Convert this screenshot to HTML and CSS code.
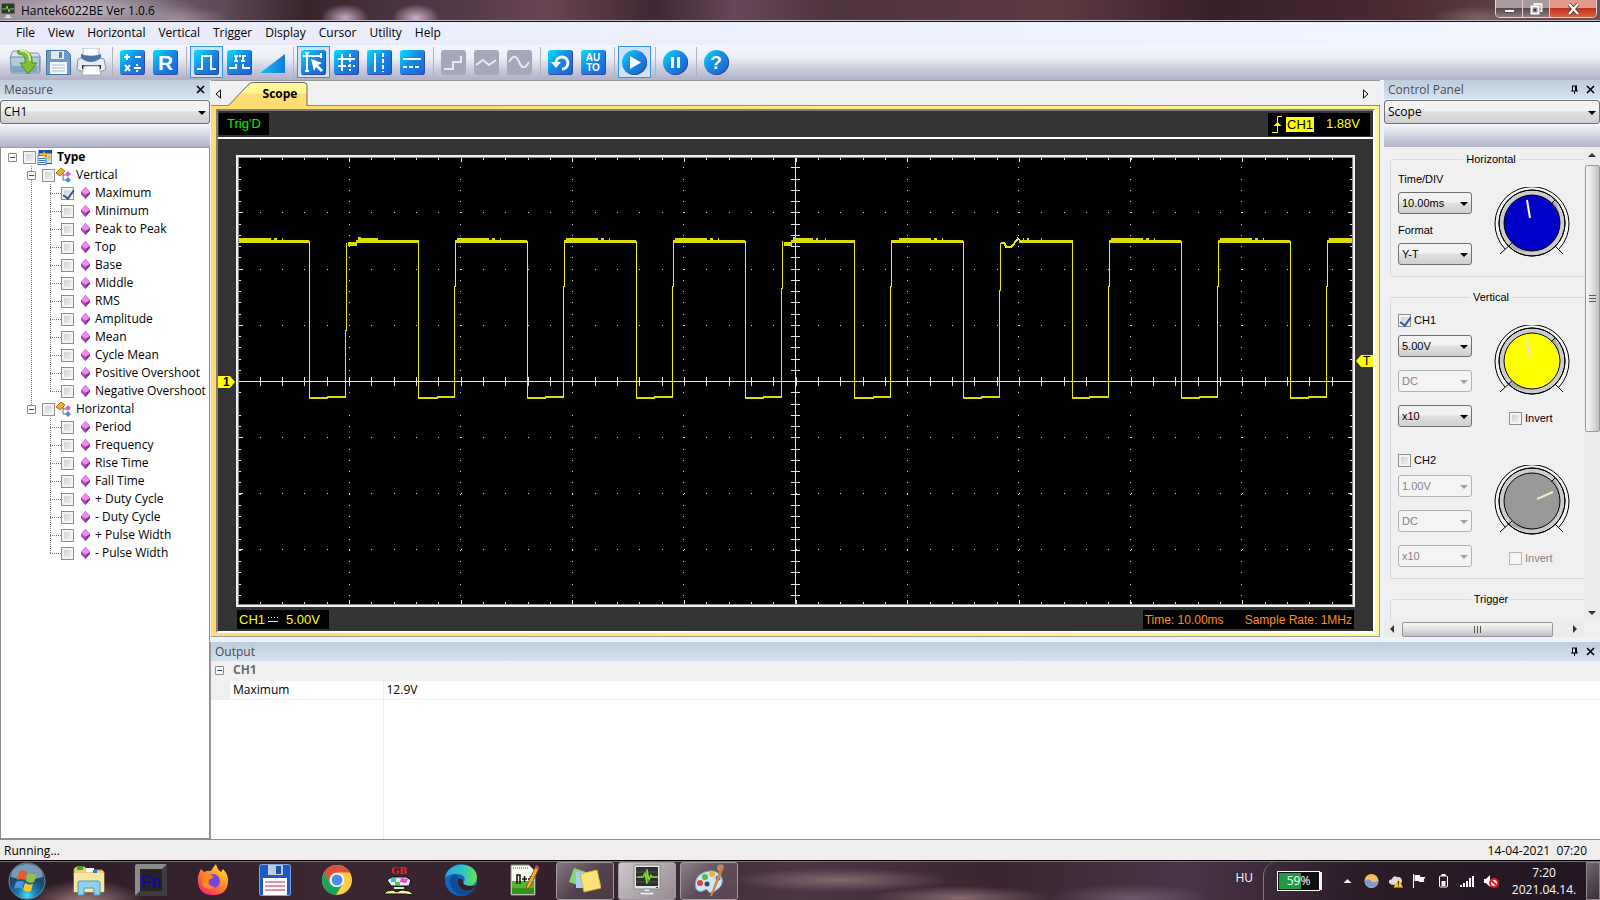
FILE: index.html
```html
<!DOCTYPE html>
<html lang="en">
<head>
    <meta charset="UTF-8">
    <meta name="viewport" content="width=device-width, initial-scale=1.0">
    <title>Hantek6022BE Ver 1.0.6</title>
    <link rel="stylesheet" href="styles.css">
</head>
<body>

    <!-- shared shapes -->
    <svg class="defs" width="0" height="0" aria-hidden="true">
        <symbol id="gem" viewBox="0 0 9 12">
            <path d="M4.5 0 9 5v2l-4.5 5L0 7V5z" fill="#8a2c90"/>
            <path d="M4.5 0 9 5 4.5 8 0 5z" fill="#ec8cec"/>
            <path d="M0 5v2l4.500 5V8z" fill="#b850bc"/>
        </symbol>
        <symbol id="branch" viewBox="0 0 15 15">
            <path d="M7 5v7h4M7 7h4" fill="none" stroke="#667"/>
            <path d="M0 5 5 0l4 3-5 5z" fill="#e8b030" stroke="#a87410"/>
            <path d="M9 6l3-3 3 3-3 3z" fill="#d860d8"/>
            <path d="M9 12l3-3 3 3-3 3z" fill="#4a90e0"/>
        </symbol>
        <symbol id="knob" viewBox="0 0 76 70">
            <path d="M11 62A37 37 0 1 1 65 62" fill="#f4f4f4" stroke="#000"/>
            <circle cx="38" cy="36" r="33" fill="#ccc" stroke="#000"/>
            <path d="M60 13A33 33 0 0 1 16 60L20 56A28 28 0 0 0 58 16z" fill="#aaa"/>
            <circle cx="38" cy="36" r="33" fill="none" stroke="#000"/>
            <circle cx="38" cy="36" r="28" fill="currentColor" stroke="#000"/>
            <path d="M18 56 6 67M61 59l8 8M57 17l4-4" stroke="#000"/>
        </symbol>
        <symbol id="pin" viewBox="0 0 9 9">
            <path d="M2 1h5M2.5 1v5M5.5 1v5M6.5 1v5M1 6h7M4.5 6v3" stroke="#000" fill="none"/>
        </symbol>
        <symbol id="cross" viewBox="0 0 9 9">
            <path d="M1 1l7 7M8 1 1 8" stroke="#000" stroke-width="1.6" fill="none"/>
        </symbol>
        <!-- one period of the signal, starting on the rising edge -->
        <symbol id="period" viewBox="0 0 112 446" overflow="visible">
            <path d="M.5 240V128h1V83M73.500 83V241" fill="none" stroke="#f2f200"/>
            <path d="M1 82h72v3H1zM73 239h19v2H73zM91 238h18v2H91z" fill="#dcdc00"/>
        </symbol>
        <symbol id="ripple" viewBox="0 0 112 446" overflow="visible">
            <path d="M3 80h32v2H3zM38 80h3v2h-3zM46 80h1v2h-1z" fill="#dcdc00"/>
        </symbol>
    </svg>

    <header class="titlebar">
        <svg class="app-icon" viewBox="0 0 16 16">
            <rect x="1" y="1" width="14" height="11" fill="#333" stroke="#999"/>
            <path d="M2 7h4l1-3 2 6 1-3h4" fill="none" stroke="#6d3"/>
            <path d="M6 13h4v2H6zM4 15h8v1H4z" fill="#ddd"/>
        </svg>
        <span class="app-title">Hantek6022BE Ver 1.0.6</span>
        <div class="window-buttons">
            <button class="win-min" aria-label="Minimize"><svg viewBox="0 0 13 12"><rect x="1.5" y="6.5" width="10" height="3" fill="#fff" stroke="#555"/></svg></button>
            <button class="win-restore" aria-label="Restore"><svg viewBox="0 0 13 12"><path d="M4.5 3V1h7v7H10" fill="none" stroke="#eee" stroke-width="2"/><rect x="1.5" y="3.5" width="7" height="7" fill="#888" stroke="#fff" stroke-width="2"/><rect x="4" y="6" width="2" height="2" fill="#334"/></svg></button>
            <button class="win-close" aria-label="Close"><svg viewBox="0 0 13 12"><path d="M2 1l9 10M11 1 2 11" stroke="#533" stroke-width="4"/><path d="M2 1l9 10M11 1 2 11" stroke="#fff" stroke-width="2.4"/></svg></button>
        </div>
    </header>

    <nav class="menubar">
        <a href="#">File</a>
        <a href="#">View</a>
        <a href="#">Horizontal</a>
        <a href="#">Vertical</a>
        <a href="#">Trigger</a>
        <a href="#">Display</a>
        <a href="#">Cursor</a>
        <a href="#">Utility</a>
        <a href="#">Help</a>
    </nav>

    <div class="toolbar">
        <button aria-label="Open"><svg class="wide" viewBox="0 0 33 28">
            <path d="M2 6l2-3h7l2 2h16l2 3v16H2z" fill="#d6e4ec" stroke="#7d95a0"/>
            <path d="M1 9h30l-1 16H3z" fill="#b4cbdc" stroke="#7890a2"/>
            <path d="M3 18h26l-1 6H4z" fill="#7ba6c6"/>
            <path d="M9 3c9-3 15 3 14 12h5l-9 11-8-11h5c1-6-2-9-7-9z" fill="#7cc03a" stroke="#4f8a1c"/>
            <path d="M11 3c7-1 10 3 10 10" fill="none" stroke="#d5f09a" stroke-width="2"/>
        </svg></button>
        <button aria-label="Save"><svg class="icon" viewBox="0 0 25 25">
            <path d="M.5.5h20l4 4v20H.5z" fill="#6d9ac8" stroke="#4a74a4"/>
            <rect x="5" y="1" width="13" height="8" fill="#dfe9f4"/><rect x="13" y="2" width="3" height="6" fill="#5580b0"/>
            <rect x="4" y="12" width="17" height="12" fill="#f3f7fb"/>
            <path d="M6 15h13M6 18h13M6 21h13" stroke="#a9bdd2"/>
        </svg></button>
        <button aria-label="Print"><svg class="wide" viewBox="0 0 33 28">
            <path d="M8 0h16v8H8z" fill="#fafcff" stroke="#b0b8c4"/>
            <path d="M3 11q13-5 26 0l2 10-3 2H5l-3-2z" fill="#e7ebf2" stroke="#8b95a5"/>
            <path d="M6 10q10 8 20 0V6q-10 4-20 0z" fill="#4877aa"/>
            <path d="M7 17h19v4H7z" fill="#2d3440"/>
            <path d="M9 18h15l2 9H7z" fill="#fff" stroke="#a5adba"/>
        </svg></button>
        <span class="sep"></span>
        <button aria-label="Math"><svg class="icon tile" viewBox="0 0 25 25"><path d="M4 7h6M7 4v6M15 7h6M5 15l5 6M10 15l-5 6M14 18h7" stroke="#fff" stroke-width="2"/><path d="M16 14h2v2h-2zM16 20h2v2h-2z" fill="#fff"/></svg></button>
        <button aria-label="Reference"><svg class="icon tile" viewBox="0 0 25 25"><text x="5" y="20" class="glyph-r">R</text></svg></button>
        <span class="sep"></span>
        <button class="on" aria-label="Pulse"><svg class="icon tile" viewBox="0 0 25 25"><path d="M3 19h5V6h9v13h5" fill="none" stroke="#fff" stroke-width="2"/></svg></button>
        <button aria-label="Pulse average"><svg class="icon tile" viewBox="0 0 25 25"><path d="M2 18h7v-4M16 14v4h7" fill="none" stroke="#fff" stroke-width="2"/><path d="M7 6h12" stroke="#fff" stroke-width="2" stroke-dasharray="4 1 2 1"/><path d="M7 11h4M14 11h4M9 6v6M16 6v6" stroke="#fff" stroke-width="2"/></svg></button>
        <button aria-label="Ramp"><svg class="icon" viewBox="0 0 25 25"><defs><linearGradient id="ramp"><stop offset="0" stop-color="#10c0f4"/><stop offset="1" stop-color="#1878dc"/></linearGradient></defs><path d="M0 23 25 4v19z" fill="url(#ramp)"/></svg></button>
        <span class="sep"></span>
        <button class="on" aria-label="Cursor track"><svg class="icon tile" viewBox="0 0 25 25"><path d="M2 6h19M6 2v19M4 3h4M4 21h4M20 3v5" fill="none" stroke="#fff" stroke-width="2"/><path d="M10 9l11 4-4 2 5 5-2 2-5-5-2 4z" fill="#fff"/></svg></button>
        <button aria-label="Cursor cross"><svg class="icon tile" viewBox="0 0 25 25"><path d="M4 9h17M8 4v17" stroke="#fff" stroke-width="2"/><path d="M4 16h17M16 4v17" stroke="#fff" stroke-width="2" stroke-dasharray="3 2"/></svg></button>
        <button aria-label="Cursor vertical"><svg class="icon tile" viewBox="0 0 25 25"><path d="M8 3v19" stroke="#fff" stroke-width="2"/><path d="M16 3v19" stroke="#fff" stroke-width="2" stroke-dasharray="4 2"/></svg></button>
        <button aria-label="Cursor horizontal"><svg class="icon tile" viewBox="0 0 25 25"><path d="M3 9h18" stroke="#fff" stroke-width="2"/><path d="M3 17h18" stroke="#fff" stroke-width="2" stroke-dasharray="4 2"/></svg></button>
        <span class="sep"></span>
        <button disabled aria-label="Step"><svg class="icon tile" viewBox="0 0 25 25"><path d="M3 19h9v-7h8V6" fill="none" stroke="#e6eaf2" stroke-width="2"/></svg></button>
        <button disabled aria-label="Linear"><svg class="icon tile" viewBox="0 0 25 25"><path d="M2 15l7-5 6 5 7-5" fill="none" stroke="#e6eaf2" stroke-width="2"/></svg></button>
        <button disabled aria-label="Sine"><svg class="icon tile" viewBox="0 0 25 25"><path d="M2 12c4-7 7-7 10 0s6 7 10 0" fill="none" stroke="#e6eaf2" stroke-width="2"/></svg></button>
        <span class="sep"></span>
        <button aria-label="Undo"><svg class="icon tile" viewBox="0 0 25 25"><path d="M8 12a6 6 0 1 1 6 7" fill="none" stroke="#fff" stroke-width="3"/><path d="M3 12h10l-5 6z" fill="#fff"/></svg></button>
        <button aria-label="Auto set"><svg class="icon tile" viewBox="0 0 25 25"><text x="12" y="11" class="glyph-auto">AU</text><text x="12" y="21" class="glyph-auto">TO</text></svg></button>
        <span class="sep"></span>
        <button class="on" aria-label="Start"><svg class="icon tile round" viewBox="0 0 25 25"><path d="M8 6l11 6.500L8 19z" fill="#fff"/></svg></button>
        <span class="sep"></span>
        <button aria-label="Pause"><svg class="icon tile round" viewBox="0 0 25 25"><path d="M8 7h3v11H8zM14 7h3v11h-3z" fill="#fff"/></svg></button>
        <span class="sep"></span>
        <button aria-label="Help"><svg class="icon tile round" viewBox="0 0 25 25"><text x="12" y="19" class="glyph-help">?</text></svg></button>
    </div>

    <main class="workspace">

        <section class="measure">
            <div class="caption">
                <h2>Measure</h2>
                <button aria-label="Close Measure"><svg viewBox="0 0 9 9"><use href="#cross"/></svg></button>
            </div>
            <div class="combo"><select aria-label="Measure channel"><option>CH1</option><option>CH2</option></select></div>
            <div class="strip"></div>
            <ul class="tree">
                <li>
                    <label class="node root"><i class="toggle"></i><input type="checkbox"><svg class="node-icon" viewBox="0 0 15 14">
                        <rect x="2" y="0" width="13" height="13" fill="#cfe0f8" stroke="#1c4cae"/><rect x="2" y="0" width="13" height="3" fill="#1c4cae"/>
                        <rect x="1" y="5" width="8" height="9" fill="#fff" stroke="#3a6cc0"/><path d="M2 8h6M2 10h6M2 12h6" stroke="#3a6cc0"/>
                        <path d="M7 1v6M4 4h6M12 4v6M9 7h6" stroke="#f4c000" stroke-width="1.5"/></svg>Type</label>
                    <ul class="groups">
                        <li>
                            <label class="node group"><i class="toggle"></i><input type="checkbox"><svg class="node-icon"><use href="#branch"/></svg>Vertical</label>
                            <ul class="leaves">
                                <li><label class="node"><input type="checkbox" checked><svg class="gem"><use href="#gem"/></svg>Maximum</label></li>
                                <li><label class="node"><input type="checkbox"><svg class="gem"><use href="#gem"/></svg>Minimum</label></li>
                                <li><label class="node"><input type="checkbox"><svg class="gem"><use href="#gem"/></svg>Peak to Peak</label></li>
                                <li><label class="node"><input type="checkbox"><svg class="gem"><use href="#gem"/></svg>Top</label></li>
                                <li><label class="node"><input type="checkbox"><svg class="gem"><use href="#gem"/></svg>Base</label></li>
                                <li><label class="node"><input type="checkbox"><svg class="gem"><use href="#gem"/></svg>Middle</label></li>
                                <li><label class="node"><input type="checkbox"><svg class="gem"><use href="#gem"/></svg>RMS</label></li>
                                <li><label class="node"><input type="checkbox"><svg class="gem"><use href="#gem"/></svg>Amplitude</label></li>
                                <li><label class="node"><input type="checkbox"><svg class="gem"><use href="#gem"/></svg>Mean</label></li>
                                <li><label class="node"><input type="checkbox"><svg class="gem"><use href="#gem"/></svg>Cycle Mean</label></li>
                                <li><label class="node"><input type="checkbox"><svg class="gem"><use href="#gem"/></svg>Positive Overshoot</label></li>
                                <li><label class="node"><input type="checkbox"><svg class="gem"><use href="#gem"/></svg>Negative Overshoot</label></li>
                            </ul>
                        </li>
                        <li>
                            <label class="node group"><i class="toggle"></i><input type="checkbox"><svg class="node-icon"><use href="#branch"/></svg>Horizontal</label>
                            <ul class="leaves">
                                <li><label class="node"><input type="checkbox"><svg class="gem"><use href="#gem"/></svg>Period</label></li>
                                <li><label class="node"><input type="checkbox"><svg class="gem"><use href="#gem"/></svg>Frequency</label></li>
                                <li><label class="node"><input type="checkbox"><svg class="gem"><use href="#gem"/></svg>Rise Time</label></li>
                                <li><label class="node"><input type="checkbox"><svg class="gem"><use href="#gem"/></svg>Fall Time</label></li>
                                <li><label class="node"><input type="checkbox"><svg class="gem"><use href="#gem"/></svg>+ Duty Cycle</label></li>
                                <li><label class="node"><input type="checkbox"><svg class="gem"><use href="#gem"/></svg>- Duty Cycle</label></li>
                                <li><label class="node"><input type="checkbox"><svg class="gem"><use href="#gem"/></svg>+ Pulse Width</label></li>
                                <li><label class="node"><input type="checkbox"><svg class="gem"><use href="#gem"/></svg>- Pulse Width</label></li>
                            </ul>
                        </li>
                    </ul>
                </li>
            </ul>
        </section>

        <div class="center">
            <div class="tabs">
                <button class="tab-arrow" aria-label="Previous tab"><svg viewBox="0 0 6 10"><path d="M5.5 1v8L1 5z" fill="none" stroke="#000"/></svg></button>
                <button class="tab"><svg class="tab-shape" viewBox="0 0 80 24" preserveAspectRatio="none"><defs><linearGradient id="tabfill" x2="0" y2="1"><stop offset="0" stop-color="#fffb9c"/><stop offset=".45" stop-color="#fff490"/><stop offset=".5" stop-color="#ffdf74"/><stop offset="1" stop-color="#ffdb70"/></linearGradient></defs><path d="M0 24 20 3q2-2.500 5-2.500h51q3 0 3 3V24" fill="url(#tabfill)" stroke="#666"/></svg><span>Scope</span></button>
                <button class="tab-arrow last" aria-label="Next tab"><svg viewBox="0 0 6 10"><path d="M.5 1v8L5 5z" fill="none" stroke="#000"/></svg></button>
            </div>

            <section class="scope-frame">
                <div class="scope">
                    <div class="scope-head">
                        <span class="trig-state">Trig'D</span>
                        <span class="trig-level">
                            <svg class="edge" viewBox="0 0 10 17"><path d="M0 16.500h5.500V.5H10" fill="none" stroke="#ff0"/><path d="M5.500 6l4 4h-8z" fill="#ff0"/></svg>
                            <b>CH1</b>
                            <span>1.88V</span>
                        </span>
                    </div>
                    <div class="plot-area">
                        <span class="marker-ch">1</span>
                        <svg class="plot" viewBox="0 0 1113 446" preserveAspectRatio="none" shape-rendering="crispEdges">
                            <!-- dotted divisions -->
                            <g stroke="#d8d8d8" stroke-dasharray="1 21.33" stroke-dashoffset="1.6">
                                <path d="M0 54.5H1113M0 111.5H1113M0 167.5H1113M0 279.5H1113M0 335.5H1113M0 391.5H1113"/>
                            </g>
                            <g stroke="#d8d8d8" stroke-dasharray="1 10.25" stroke-dashoffset="2">
                                <path d="M110.5 0V446M221.5 0V446M333.5 0V446M444.5 0V446M668.5 0V446M779.5 0V446M891.5 0V446M1002.5 0V446"/>
                            </g>
                            <!-- edge ticks -->
                            <g stroke="#e4e4e4" stroke-dasharray="1 21.33" stroke-dashoffset="1.6">
                                <path d="M0 1H1113M0 445H1113" stroke-width="2"/>
                                <path d="M0 223.5H1113" stroke-width="9"/>
                            </g>
                            <g stroke="#e4e4e4" stroke-dasharray="1 110.6" stroke-dashoffset="1.4">
                                <path d="M0 2H1113M0 444H1113" stroke-width="4"/>
                            </g>
                            <g stroke="#e4e4e4" stroke-dasharray="1 10.25" stroke-dashoffset="2">
                                <path d="M1 0V446M1112 0V446" stroke-width="2"/>
                                <path d="M556.5 0V446" stroke-width="9"/>
                            </g>
                            <path d="M0 54.5h4M0 111.5h4M0 167.5h4M0 279.5h4M0 335.5h4M0 391.5h4M1109 54.5h4M1109 111.5h4M1109 167.5h4M1109 279.5h4M1109 335.5h4M1109 391.5h4" stroke="#e4e4e4"/>
                            <path d="M0 223.5H1113M556.5 0V446" stroke="#e4e4e4"/>
                            <!-- channel 1 -->
                            <g>
                                <use href="#period" x="-3" width="112" height="446"/><use href="#ripple" x="-3" width="112" height="446"/>
                                <use href="#period" x="215" width="112" height="446"/><use href="#ripple" x="215" width="112" height="446"/>
                                <use href="#period" x="324" width="112" height="446"/><use href="#ripple" x="324" width="112" height="446"/>
                                <use href="#period" x="433" width="112" height="446"/><use href="#ripple" x="433" width="112" height="446"/>
                                <use href="#period" x="651" width="112" height="446"/><use href="#ripple" x="657" width="112" height="446"/>
                                <use href="#period" x="869" width="112" height="446"/><use href="#ripple" x="869" width="112" height="446"/>
                                <use href="#period" x="978" width="112" height="446"/><use href="#ripple" x="978" width="112" height="446"/>
                                <use href="#period" x="1087" width="112" height="446"/><use href="#ripple" x="1087" width="112" height="446"/>
                                <!-- periods with a dip after the rising edge -->
                                <g fill="none" stroke="#e8e800">
                                    <path d="M106.5 240V172h1V85M179.5 83V241M542.5 240V130h1V83M615.5 83V241M760.5 240V132h1V85M833.5 83V241"/>
                                    <path d="M762 84.5h3l2 4h6l3-4 3-4 3 3" stroke-width="2"/>
                                </g>
                                <path d="M109 84h9v4h-9zM117 82h3v3h-3zM119 79h3v3h-3zM121 80h18v2h-18zM119 82h61v3h-61zM179 239h20v2h-20zM198 238h18v2h-18z" fill="#dcdc00"/>
                                <path d="M545 84h8v4h-8zM552 82h3v3h-3zM554 79h3v3h-3zM556 80h18v2h-18zM577 80h2v2h-2zM586 80h1v2h-1zM555 82h61v3h-61zM615 239h20v2h-20zM634 238h18v2h-18z" fill="#dcdc00"/>
                                <path d="M784 80h1v2h-1zM788 80h2v2h-2zM802 80h1v2h-1zM780 82h54v3h-54zM833 239h18v2h-18zM850 238h20v2h-20z" fill="#dcdc00"/>
                            </g>
                        </svg>
                        <span class="marker-trig">T</span>
                    </div>
                    <div class="scope-foot">
                        <span class="ch-info">CH1<svg class="coupling" viewBox="0 0 10 6"><path d="M0 .5h10" stroke="#ff0" stroke-dasharray="1 2"/><path d="M0 4.5h10" stroke="#ff0"/></svg><span>5.00V</span></span>
                        <span class="time-info"><span>Time: 10.00ms</span><span>Sample Rate: 1MHz</span></span>
                    </div>
                </div>
            </section>

            <section class="output">
                <div class="caption">
                    <h2>Output</h2>
                    <button aria-label="Pin Output"><svg viewBox="0 0 9 9"><use href="#pin"/></svg></button>
                    <button aria-label="Close Output"><svg viewBox="0 0 9 9"><use href="#cross"/></svg></button>
                </div>
                <table class="results">
                    <tbody>
                        <tr class="head"><td><i class="toggle"></i></td><th colspan="2">CH1</th></tr>
                        <tr><td></td><td>Maximum</td><td>12.9V</td></tr>
                        <tr class="fill"><td></td><td></td><td></td></tr>
                    </tbody>
                </table>
            </section>
        </div>

        <aside class="control">
            <div class="caption">
                <h2>Control Panel</h2>
                <button aria-label="Pin Control Panel"><svg viewBox="0 0 9 9"><use href="#pin"/></svg></button>
                <button aria-label="Close Control Panel"><svg viewBox="0 0 9 9"><use href="#cross"/></svg></button>
            </div>
            <div class="combo"><select aria-label="Panel"><option>Scope</option></select></div>
            <div class="strip"></div>
            <div class="control-body">
                <div class="control-view">
                    <fieldset>
                        <legend>Horizontal</legend>
                        <div class="pair">
                            <div class="fields horizontal">
                                <label for="timediv">Time/DIV</label>
                                <div class="combo small"><select id="timediv"><option>10.00ms</option></select></div>
                                <label for="format">Format</label>
                                <div class="combo small"><select id="format"><option>Y-T</option><option>X-Y</option></select></div>
                            </div>
                            <div class="dial">
                                <svg class="knob blue" viewBox="0 0 76 70"><use href="#knob"/><path d="M33 13l3 18" stroke="#fff8d0" stroke-width="2"/></svg>
                            </div>
                        </div>
                    </fieldset>
                    <fieldset>
                        <legend>Vertical</legend>
                        <div class="pair">
                            <div class="fields">
                                <label class="check"><input type="checkbox" checked>CH1</label>
                                <div class="combo small"><select aria-label="CH1 volts"><option>5.00V</option></select></div>
                                <div class="combo small off"><select aria-label="CH1 coupling" disabled><option>DC</option></select></div>
                                <div class="combo small"><select aria-label="CH1 probe"><option>x10</option></select></div>
                            </div>
                            <div class="dial">
                                <svg class="knob yellow" viewBox="0 0 76 70"><use href="#knob"/><path d="M32 13l4 19" stroke="#e8e8d0" stroke-width="2"/></svg>
                                <label class="check"><input type="checkbox">Invert</label>
                            </div>
                        </div>
                        <div class="pair second">
                            <div class="fields">
                                <label class="check"><input type="checkbox">CH2</label>
                                <div class="combo small off"><select aria-label="CH2 volts" disabled><option>1.00V</option></select></div>
                                <div class="combo small off"><select aria-label="CH2 coupling" disabled><option>DC</option></select></div>
                                <div class="combo small off"><select aria-label="CH2 probe" disabled><option>x10</option></select></div>
                            </div>
                            <div class="dial">
                                <svg class="knob grey" viewBox="0 0 76 70"><use href="#knob"/><path d="M43 34l16-7" stroke="#eeeec8" stroke-width="2"/></svg>
                                <label class="check off"><input type="checkbox" disabled>Invert</label>
                            </div>
                        </div>
                    </fieldset>
                    <fieldset>
                        <legend>Trigger</legend>
                        <div class="pair"></div>
                    </fieldset>
                </div>
                <div class="vscroll"><i class="arrow up"></i><b class="thumb"></b><i class="arrow down"></i></div>
                <div class="hscroll"><i class="arrow left"></i><b class="thumb"></b><i class="arrow right"></i></div>
            </div>
        </aside>
    </main>

    <footer class="statusbar">
        <span>Running...</span>
        <span>14-04-2021&nbsp; 07:20</span>
    </footer>

    <div class="taskbar">
        <button class="start" aria-label="Start menu"><svg viewBox="0 0 38 38">
            <defs><radialGradient id="orb" cy=".9"><stop offset="0" stop-color="#3fe0f8"/><stop offset=".5" stop-color="#1a80b4"/><stop offset="1" stop-color="#1b4a72"/></radialGradient></defs>
            <circle cx="19" cy="19" r="18" fill="url(#orb)" stroke="#6c8ca4"/>
            <path d="M3 15a16 13 0 0 1 32 0q-16 5-32 0z" fill="#c8dcea" opacity=".55"/>
            <path d="M11 10q4-3 8 0l-2 8q-4-2-8 0z" fill="#ea5a28"/><path d="M20 11q4 3 9 1l-3 8q-4 2-8-1z" fill="#8cc63e"/>
            <path d="M8 20q4-2 8 0l-2 7q-4-3-8 0z" fill="#4a98e0"/><path d="M17 21q4 3 8 1l-2 7q-4 2-8-1z" fill="#fcc62c"/>
        </svg></button>
        <button class="task" aria-label="Explorer"><svg viewBox="0 0 32 32">
            <path d="M1 5l2-2h9l2 3h15l2 2v20H1z" fill="#e8cf78" stroke="#b49548"/><path d="M4 2h6v4H4z" fill="#3aa63a"/><path d="M13 4h8v4h-8z" fill="#fff"/><path d="M20 6h4v3h-4z" fill="#2a7ae0"/>
            <path d="M1 9h30v19H1z" fill="#f5e6a0"/><path d="M5 31V19q0-2 2-2h18q2 0 2 2v12h-6v-7H11v7z" fill="#8fd0ee" stroke="#4a9cc4"/>
        </svg></button>
        <button class="task" aria-label="Fn"><svg viewBox="0 0 32 32">
            <rect width="32" height="32" rx="2" fill="#8c8c8c"/><path d="M32 0v32H0l5-5h22V5z" fill="#3c3c3c"/><rect x="5" y="5" width="22" height="22" fill="#2a2028"/><text x="16" y="23" class="glyph-fn">Fn</text>
        </svg></button>
        <button class="task" aria-label="Firefox"><svg viewBox="0 0 32 32">
            <defs><linearGradient id="fox" x1="1" y1="0" x2=".3" y2="1"><stop offset="0" stop-color="#fff24a"/><stop offset=".5" stop-color="#ff9422"/><stop offset="1" stop-color="#f52a6a"/></linearGradient></defs>
            <path d="M4 5l3 3q4-2 7-1 2-4 5-7 1 5 5 8l2-3q6 6 5 13-1 13-15 13T1 18q-1-6 3-13z" fill="url(#fox)"/>
            <circle cx="16" cy="17" r="7" fill="#7542e5"/><path d="M6 12q6-4 11 1l-5 3q-2 6 6 7-9 5-13-3z" fill="#ff8a1e"/>
        </svg></button>
        <button class="task" aria-label="Total Commander"><svg viewBox="0 0 32 32">
            <rect x=".5" y=".5" width="31" height="31" rx="2" fill="#1c58c8" stroke="#7fa4e4"/><rect x="9" y="1" width="15" height="10" fill="#c4cad4"/><rect x="17" y="2" width="5" height="8" fill="#1c50b8"/>
            <rect x="4" y="14" width="24" height="17" fill="#fff"/><path d="M6 18h20M6 22h20M6 26h20" stroke="#d02040"/>
        </svg></button>
        <button class="task" aria-label="Chrome"><svg viewBox="0 0 32 32">
            <circle cx="16" cy="16" r="15" fill="#ffcd41"/><path d="M3 8.500A15 15 0 0 1 29 8.500H16A7.500 7.500 0 0 0 9 19z" fill="#dd5144"/><path d="M3 8.500A15 15 0 0 0 15 31l7-11.500A7.500 7.500 0 0 1 9.500 20z" fill="#1aa260"/>
            <circle cx="16" cy="16" r="7" fill="#fff"/><circle cx="16" cy="16" r="5.5" fill="#4a8af4"/>
        </svg></button>
        <button class="task" aria-label="GB"><svg viewBox="0 0 32 32">
            <text x="16" y="10" class="glyph-gb">GB</text>
            <path d="M4 16l5-3h14l5 3-2 6H8z" fill="#e8e8e8" stroke="#111"/><path d="M8 14h5v4H8z" fill="#2cc"/><path d="M18 14l7 1-2 4-6-1z" fill="#e4c"/><path d="M12 18h5v3h-5z" fill="#4c4"/><path d="M11 23h10v2H11z" fill="#ddd"/>
            <path d="M1 30l3-3 6-1 3 2 6-2 7 1 5 4-9-1z" fill="#fdf6a0" stroke="#111"/>
        </svg></button>
        <button class="task" aria-label="Edge"><svg viewBox="0 0 32 32">
            <defs><linearGradient id="edge-top"><stop offset="0" stop-color="#2aa4e4"/><stop offset=".6" stop-color="#36c8c0"/><stop offset="1" stop-color="#6ae04a"/></linearGradient></defs>
            <circle cx="16" cy="16" r="16" fill="#1268c0"/><path d="M0 14C2-3 32-4 32 14q-1 8-9 8-6 0-4-4 3-8-8-8-8 0-11 4z" fill="url(#edge-top)"/>
            <path d="M11 10q-7 1-6 9t10 12q8 3 14-6-6 3-11 0-7-4-5-12z" fill="#104c98"/><path d="M13 15q-1 8 6 11 6 2 12-3l3-1-9 0q-9-1-7-6-3-3-5-1z" fill="#30202c"/>
        </svg></button>
        <button class="task" aria-label="Notepad++"><svg viewBox="0 0 32 32">
            <path d="M4 1h18l6 6v24H4z" fill="#f4faee" stroke="#888"/><path d="M5 17h22v13H5z" fill="#55b82c"/><path d="M5 24h22v6H5z" fill="#2d9414"/><path d="M6 4h15" stroke="#555" stroke-dasharray="1 1"/>
            <path d="M10 20V11h3v9M15 15h5M17.500 12v6M21 15h5M23.500 12v6" fill="none" stroke="#111" stroke-width="1.5"/><path d="M19 26l1-5L29 2l3 2-9 19z" fill="#f0b030" stroke="#8a5a10"/><path d="M29 1l3 2-1 3-3-2z" fill="#d05040"/>
        </svg></button>
        <button class="task open" aria-label="Sticky Notes"><svg viewBox="0 0 32 32">
            <path d="M5 4l15 5-6 14-14-5z" fill="#8cd07c"/><path d="M7 8h14v16H7z" fill="#a4d0f4"/><path d="M11 10l17-4 4 18-17 4z" fill="#fbe27a" stroke="#d4b040"/>
        </svg></button>
        <button class="task open active" aria-label="Hantek6022BE"><svg viewBox="0 0 32 32">
            <rect x="3" y="1" width="26" height="24" rx="1" fill="#e4e4e4" stroke="#888"/><rect x="5" y="3" width="22" height="19" fill="#2c3030"/><path d="M5 8h22M5 13h22M5 18h22" stroke="#555"/>
            <path d="M6 13h6l2-4 2 11V5l2 11 2-5 1 2h6" fill="none" stroke="#84e02c" stroke-width="1.3"/><path d="M13 25h6v3h-6zM9 28h14v3H9z" fill="#ececec" stroke="#999"/><path d="M25 23h2v1h-2z" fill="#e00"/>
        </svg></button>
        <button class="task open" aria-label="Paint"><svg viewBox="0 0 32 32">
            <path d="M3 25Q0 12 12 8t17 6q2 8-7 13-6 3-7 0-1-3-5 0-4 2-7-2z" fill="#cfe6f6" stroke="#7aa8cc"/><circle cx="12" cy="13" r="3" fill="#5ab848"/><circle cx="19" cy="10" r="3" fill="#f4b030"/><circle cx="7" cy="19" r="3" fill="#e04434"/><circle cx="14" cy="20" r="2.5" fill="#445"/><circle cx="25" cy="14" r="2.5" fill="#4a6ce0"/>
            <path d="M17 32l9-24 3 1-10 23z" fill="#e08434"/><path d="M25 7q-2-4 0-6 4-2 6 1 0 4-3 7z" fill="#b48a5c"/>
        </svg></button>

        <span class="lang">HU</span>
        <div class="tray">
            <span class="battery"><b>59%</b></span>
            <div class="tray-icons">
                <svg viewBox="0 0 14 14"><path d="M3 9l4-4 4 4z" fill="#eee"/></svg>
                <svg viewBox="0 0 14 14"><circle cx="7" cy="7" r="7" fill="#f5c060"/><path d="M0 7q4-3 7 0t7-1A7 7 0 0 1 0 7z" fill="#7c9ccc"/></svg>
                <svg viewBox="0 0 16 14"><path d="M2 10q-3-4 2-5 2-5 6-2 4-1 5 4-1 4-4 4H4z" fill="#ddd"/><path d="M11 4l5 10H6z" fill="#fc2"/><path d="M11 7v4M11 12v1" stroke="#000"/></svg>
                <svg viewBox="0 0 14 14"><path d="M1 0v14" stroke="#fff"/><path d="M2 1h5l1 2h5l-2 3 1 2H7L6 7H2z" fill="#fff"/></svg>
                <svg viewBox="0 0 14 14"><rect x="3" y="2" width="8" height="11" rx="1" fill="none" stroke="#fff"/><path d="M5 0h4v2H5zM5 7h4v5H5z" fill="#fff"/></svg>
                <svg viewBox="0 0 15 14"><path d="M0 11h2v2H0zM3 9h2v4H3zM6 7h2v6H6zM9 4h2v9H9zM12 2h2v11h-2z" fill="#fff"/></svg>
                <svg viewBox="0 0 15 14"><path d="M0 5h2l4-4v12l-4-4H0z" fill="#fff"/><circle cx="10" cy="9" r="4" fill="#fff" stroke="#d22" stroke-width="2"/><path d="M7 6l6 6" stroke="#d22" stroke-width="2"/></svg>
            </div>
            <div class="clock"><span>7:20</span><span>2021.04.14.</span></div>
            <button class="show-desktop" aria-label="Show desktop"></button>
        </div>
    </div>

</body>
</html>
```
FILE: styles.css
```css
* {
    box-sizing: border-box;
}
body {
    margin: 0;
    height: 100vh;
    display: flex;
    flex-direction: column;
    overflow: hidden;
    background: #f0f0f0;
    color: #000;
    font-family: "Open Sans", "Noto Sans", sans-serif;
    font-size: 12px;
    line-height: 18px;
}
button {
    border: 0;
    padding: 0;
    background: none;
    font: inherit;
    color: inherit;
}
ul {
    list-style: none;
    margin: 0;
    padding: 0;
}
h2 {
    margin: 0;
    font: inherit;
}
.defs {
    position: absolute;
}

/* title bar */
.titlebar {
    flex: 0 0 22px;
    display: flex;
    align-items: flex-start;
    border-bottom: 1px solid #1c1016;
    box-shadow: inset 0 -1px 0 #c8bcc4;
    background:
        radial-gradient(ellipse 120px 22px at 80px 10px, rgba(225, 215, 228, 0.75), transparent),
        radial-gradient(ellipse 50px 14px at 180px 20px, rgba(190, 170, 190, 0.6), transparent),
        radial-gradient(ellipse 24px 14px at 345px 18px, #c8a8c0, transparent),
        radial-gradient(ellipse 24px 14px at 416px 18px, #d0b0c8, transparent),
        radial-gradient(ellipse 50px 12px at 1480px 18px, rgba(160, 140, 140, 0.5), transparent),
        linear-gradient(90deg, #8a7a86 0, #5e4a58 14%, #38242c 19%, #4a3440 25%, #573c4c 30%, #6a4654 34%, #3e2832 41%, #66485a 46%, #4e343e 52%, #5c3a42 66%, #38202a 76%, #4a2c32 88%, #6e5458 100%);
}
.app-icon {
    width: 16px;
    height: 16px;
    margin: 2px 5px 0 0;
}
.app-title {
    flex: 1;
    line-height: 21px;
}
.window-buttons {
    display: flex;
    height: 18px;
    margin-right: 3px;
    border: 1px solid #e2d6da;
    border-top: 0;
    border-radius: 0 0 5px 5px;
    overflow: hidden;
}
.window-buttons button {
    width: 27px;
    display: flex;
    align-items: center;
    justify-content: center;
    border-right: 1px solid #d8ccd0;
    background: linear-gradient(#a89a9e 45%, #5c484e 50%, #8e7c82);
}
.window-buttons svg {
    width: 13px;
    height: 12px;
}
.window-buttons .win-close {
    width: 46px;
    border-right: 0;
    background: linear-gradient(#e09a8c 45%, #c03420 50%, #e0603c);
}

/* menu and toolbar */
.menubar {
    flex: 0 0 23px;
    display: flex;
    align-items: center;
    gap: 13px;
    padding: 0 0 2px 16px;
    background: linear-gradient(90deg, #e8eafa, #f2f6ff);
}
.menubar a {
    color: #000;
    text-decoration: none;
}
.toolbar {
    flex: 0 0 35px;
    display: flex;
    align-items: center;
    padding: 0 0 1px 9px;
    background: linear-gradient(#f4f7fe 0, #eceef8 35%, #b2b4ca 95%);
}
.toolbar button {
    width: 33px;
    height: 32px;
    display: flex;
    align-items: center;
    justify-content: center;
    border: 1px solid transparent;
}
.toolbar .on {
    border-color: #3392f2;
    background: #cfe2f8;
}
.sep {
    width: 1px;
    height: 31px;
    margin: 0 3px 0 4px;
    background: #b4b4b8;
}
.icon {
    width: 25px;
    height: 25px;
    flex: none;
}
.wide {
    width: 33px;
    height: 28px;
    flex: none;
}
.tile {
    border-radius: 3px;
    background: linear-gradient(135deg, #00e4ff 0, #1a8ae4 45%, #1560d8);
    box-shadow: inset -1px -1px 0 #3a4a98;
}
.round {
    border-radius: 50%;
}
.toolbar button:disabled .tile {
    background: #a4a8b8;
    box-shadow: none;
}
.glyph-r, .glyph-auto, .glyph-help {
    fill: #fff;
    font-family: "Liberation Sans", Arial, sans-serif;
    font-weight: bold;
    font-size: 21px;
}
.glyph-auto {
    font-size: 10px;
    text-anchor: middle;
}
.glyph-help {
    font-size: 19px;
    text-anchor: middle;
}

/* workspace */
.workspace {
    flex: 1;
    min-height: 0;
    display: grid;
    grid-template-columns: 211px 1fr 216px;
    background: #eef2fc;
}
.caption {
    height: 19px;
    flex: none;
    display: flex;
    align-items: center;
    gap: 7px;
    padding: 0 5px 0 4px;
    color: #4c4c54;
    background: linear-gradient(#bccddb, #d6e2f0);
}
.caption h2 {
    flex: 1;
}
.caption button {
    width: 9px;
    height: 9px;
    display: flex;
}
.caption svg {
    width: 9px;
    height: 9px;
}
.combo {
    position: relative;
    height: 24px;
    margin-top: 1px;
    flex: none;
}
.combo select {
    appearance: none;
    width: 100%;
    height: 100%;
    padding: 0 3px;
    border: 1px solid #707070;
    border-radius: 3px;
    background: linear-gradient(#f2f2f2 45%, #e0e0e0 50%, #cfcfcf);
    font: inherit;
    color: #000;
}
.combo::after {
    content: "";
    position: absolute;
    right: 4px;
    top: 50%;
    margin-top: -1px;
    border: 4px solid transparent;
    border-top-color: #000;
    border-bottom: 0;
}
.combo.small {
    height: 22px;
    margin: 0;
}
.combo.off select {
    border-color: #adb2b5;
    background: #f4f4f4;
    color: #838383;
    opacity: 1;
}
.combo.off::after {
    border-top-color: #a0a0a0;
}
.strip {
    height: 23px;
    flex: none;
    background: linear-gradient(#f4f6fe, #b0b2c8);
}
input[type="checkbox"] {
    appearance: none;
    position: relative;
    flex: none;
    width: 13px;
    height: 13px;
    margin: 0;
    border: 1px solid #8e8f8f;
    background: linear-gradient(135deg, #c4c8d0, #f8f8f8);
    box-shadow: inset 0 0 0 2px #f4f4f4;
}
input[type="checkbox"]:checked::after {
    content: "";
    position: absolute;
    left: 3px;
    top: 0;
    width: 5px;
    height: 9px;
    border: solid #3c5898;
    border-width: 0 2px 2px 0;
    transform: rotate(35deg);
}
input[type="checkbox"]:disabled {
    border-color: #b8b8b8;
    background: #f8f8f8;
}
.toggle {
    display: block;
    position: relative;
    flex: none;
    width: 9px;
    height: 9px;
    border: 1px solid #8a8a90;
    border-radius: 1px;
    background: linear-gradient(90deg, #2c4a9c, #2c4a9c) center / 5px 1px no-repeat, #fbfbfb;
}

/* measure tree */
.measure {
    display: flex;
    flex-direction: column;
    min-height: 0;
    padding-right: 1px;
}
.tree {
    flex: 1;
    overflow: hidden;
    border: 1px solid #8c8c94;
    border-top-color: #9a9cb0;
    background: #fff;
}
.node {
    height: 18px;
    display: flex;
    align-items: center;
    white-space: nowrap;
}
.node-icon {
    width: 15px;
    height: 15px;
    margin: 0 5px 0 1px;
}
.root {
    padding-left: 7px;
    font-weight: bold;
}
.group {
    padding-left: 26px;
}
.toggle + input {
    margin-left: 6px;
}
.groups {
    background: repeating-linear-gradient(#777 0 1px, transparent 1px 2px) 30px 0 / 1px 244px no-repeat;
}
.leaves {
    background: repeating-linear-gradient(#777 0 1px, transparent 1px 2px) 49px 0 / 1px calc(100% - 9px) no-repeat;
}
.leaves .node {
    padding-left: 60px;
    background: repeating-linear-gradient(90deg, #777 0 1px, transparent 1px 2px) 49px 9px / 11px 1px no-repeat;
}
.gem {
    width: 9px;
    height: 12px;
    margin: 0 5px 0 7px;
}

/* scope window */
.center {
    display: flex;
    flex-direction: column;
    min-width: 0;
    min-height: 0;
    padding-right: 4px;
}
.tabs {
    flex: 0 0 26px;
    display: flex;
    align-items: center;
    padding: 1px 11px 0 4px;
    border-top: 1px solid #999;
    border-bottom: 1px solid #8c8c90;
    background: #f0f0f0;
}
.tab-arrow {
    width: 6px;
    height: 10px;
    display: flex;
}
.tab-arrow.last {
    margin-left: auto;
}
.tab-arrow svg {
    width: 6px;
    height: 10px;
}
.tab {
    display: grid;
    width: 80px;
    height: 24px;
    margin: 0 0 -1px 7px;
    font-weight: bold;
    align-self: flex-end;
}
.tab > * {
    grid-area: 1 / 1;
}
.tab-shape {
    width: 80px;
    height: 24px;
}
.tab span {
    align-self: center;
    padding-left: 24px;
}
.scope-frame {
    flex: 1;
    min-height: 0;
    display: flex;
    padding: 3px 4px 3px 5px;
    border-right: 1px solid #9c9c9c;
    border-bottom: 1px solid #9c9c9c;
    background: linear-gradient(90deg, #ffdb70, #fff79c);
}
.scope {
    flex: 1;
    min-width: 0;
    display: flex;
    flex-direction: column;
    border: 2px solid #fff;
    border-top-color: #808080;
    border-left-color: #808080;
    background: #333;
    font-family: "Liberation Sans", Arial, sans-serif;
    line-height: 16px;
}
.scope-head {
    flex: 0 0 28px;
    display: flex;
    justify-content: space-between;
    align-items: center;
    padding: 1px 3px 1px 1px;
    border-bottom: 2px solid #fff;
    font-size: 13px;
}
.trig-state {
    padding: 3px 8px;
    background: #000;
    color: #00f800;
}
.trig-level {
    display: flex;
    align-items: center;
    padding: 3px 10px 3px 4px;
    background: #000;
    color: #ff0;
}
.trig-level b {
    margin: 0 12px 0 4px;
    padding: 0 1px;
    background: #ff0;
    color: #000;
    font-weight: normal;
    line-height: 15px;
}
.edge {
    width: 10px;
    height: 17px;
}
.plot-area {
    flex: 1;
    min-height: 0;
    display: flex;
    position: relative;
    padding: 16px 18px 0;
}
.plot {
    flex: 1;
    min-width: 0;
    height: 100%;
    border: 2px solid #f2eef2;
    outline: 1px solid #888;
    outline-offset: -3px;
    padding: 1px;
    background: #000;
}
.marker-ch, .marker-trig {
    position: absolute;
    width: 17px;
    height: 12px;
    background: #ff0;
    color: #000;
    font-size: 12px;
    line-height: 12px;
}
.marker-ch {
    left: 0;
    top: 237px;
    padding-left: 5px;
    clip-path: polygon(0 0, 70% 0, 100% 50%, 70% 100%, 0 100%);
    font-weight: bold;
}
.marker-trig {
    right: 0;
    top: 216px;
    padding-left: 7px;
    clip-path: polygon(30% 0, 100% 0, 100% 100%, 30% 100%, 0 50%);
}
.scope-foot {
    flex: 0 0 24px;
    display: flex;
    justify-content: space-between;
    align-items: center;
    padding: 1px 19px 0;
    font-size: 12px;
}
.ch-info, .time-info {
    display: flex;
    align-items: center;
    height: 19px;
    padding: 0 2px;
    background: #000;
}
.ch-info {
    gap: 3px;
    padding-right: 9px;
    color: #ff0;
    font-size: 13px;
}
.ch-info span {
    margin-left: 5px;
}
.coupling {
    width: 10px;
    height: 6px;
}
.time-info {
    gap: 21px;
    color: #ff8c1c;
}

/* output grid */
.output {
    flex: 0 0 197px;
    display: flex;
    flex-direction: column;
    margin: 5px -220px 0 -1px;
    border-left: 1px solid #9c9c9c;
    background: #fff;
}
.results {
    flex: 1;
    width: 100%;
    border-collapse: collapse;
}
.results td, .results th {
    height: 19px;
    padding: 0 3px;
    border-bottom: 1px solid #f0f0f0;
    text-align: left;
}
.results td:first-child {
    width: 19px;
    padding: 0 0 0 4px;
    background: #f0f0f0;
}
.results td:nth-child(2) {
    width: 153px;
    border-right: 1px solid #f0f0f0;
}
.results .head th {
    background: #f0f0f0;
    color: #6c6c6c;
}
.results .fill td {
    height: auto;
    border-bottom: 0;
    background: #fff;
}

/* control panel */
.control {
    display: flex;
    flex-direction: column;
    min-width: 0;
    height: 557px;
}
.control-body {
    flex: 1;
    min-height: 0;
    display: grid;
    grid-template-columns: 1fr 16px;
    grid-template-rows: 1fr 16px;
    background: #f0f0f0;
    font-family: "Liberation Sans", Arial, sans-serif;
    font-size: 11px;
    line-height: 13px;
}
.control-view {
    overflow: hidden;
    min-height: 0;
    padding: 5px 0 0 6px;
}
fieldset {
    width: 202px;
    margin: 0 0 13px;
    padding: 0 7px 11px;
    border: 1px solid #d2dde4;
    border-radius: 3px;
}
legend {
    margin: 0 auto;
    padding: 0 3px;
    line-height: 14px;
}
.pair {
    display: flex;
    gap: 22px;
    padding-top: 10px;
}
.pair.second {
    padding-top: 27px;
}
.fields {
    width: 74px;
    display: flex;
    flex-direction: column;
    gap: 13px;
}
.fields .check {
    margin-bottom: -5px;
}
.fields.horizontal {
    gap: 6px;
    margin-top: -3px;
}
.fields.horizontal .combo + label {
    margin-top: 4px;
}
.check {
    display: flex;
    align-items: center;
    gap: 3px;
    height: 13px;
}
.check.off {
    color: #838383;
}
.dial {
    padding-top: 11px;
}
.dial .check {
    margin: 17px 0 0 15px;
}
.knob {
    display: block;
    width: 76px;
    height: 70px;
}
.blue {
    color: #0000c8;
}
.yellow {
    color: #ff0;
}
.grey {
    color: #999;
}
.vscroll, .hscroll {
    display: flex;
    align-items: center;
    justify-content: space-between;
    background: #ececec;
}
.vscroll {
    flex-direction: column;
    padding: 6px 0;
}
.hscroll {
    padding: 0 7px 0 6px;
}
.arrow {
    border: 4px solid transparent;
}
.arrow.up {
    border-top: 0;
    border-bottom-color: #333;
}
.arrow.down {
    border-bottom: 0;
    border-top-color: #333;
}
.arrow.left {
    border-left: 0;
    border-right-color: #333;
}
.arrow.right {
    border-right: 0;
    border-left-color: #333;
}
.thumb {
    border: 1px solid #979797;
    border-radius: 2px;
}
.vscroll .thumb {
    width: 15px;
    height: 267px;
    margin: 8px 0 auto;
    background: repeating-linear-gradient(#555 0 1px, transparent 1px 3px) center / 7px 8px no-repeat, linear-gradient(90deg, #f6f6f6, #e0e0e0 50%, #c0c0c6);
}
.hscroll .thumb {
    height: 15px;
    width: 151px;
    margin: 0 auto 0 8px;
    background: repeating-linear-gradient(90deg, #555 0 1px, transparent 1px 3px) center / 8px 7px no-repeat, linear-gradient(#f6f6f6, #e0e0e0 50%, #c0c0c6);
}

/* status bar */
.statusbar {
    flex: 0 0 22px;
    display: flex;
    justify-content: space-between;
    align-items: center;
    padding: 1px 13px 0 4px;
    border-top: 1px solid #8c8c8c;
    border-bottom: 1px solid #000;
    background: #f0eded;
}

/* taskbar */
.taskbar {
    flex: 0 0 39px;
    display: flex;
    align-items: stretch;
    border-top: 1px solid #7c6c78;
    color: #fff;
    background:
        radial-gradient(ellipse 60px 22px at 85px 40px, rgba(190, 150, 150, 0.8), transparent),
        radial-gradient(ellipse 110px 12px at 840px 18px, rgba(170, 140, 140, 0.6), transparent),
        radial-gradient(ellipse 90px 12px at 960px 36px, rgba(180, 150, 150, 0.6), transparent),
        radial-gradient(ellipse 80px 14px at 1130px 36px, rgba(150, 130, 150, 0.5), transparent),
        linear-gradient(90deg, #2a1a24, #3c2732 20%, #33202c 35%, #4c3644 50%, #3a2530 62%, #4a3448 74%, #2c1c28 85%, #221622 100%);
}
.taskbar button {
    display: flex;
    align-items: center;
    justify-content: center;
}
.start {
    width: 58px;
    padding-right: 4px;
}
.start svg {
    width: 38px;
    height: 38px;
}
.task {
    width: 62px;
    padding-bottom: 2px;
}
.task svg {
    width: 32px;
    height: 32px;
}
.task.open {
    width: 58px;
    margin: 0 2px;
    border: 1px solid #a498a0;
    border-radius: 3px;
    background: linear-gradient(135deg, rgba(255, 255, 255, 0.4), rgba(255, 255, 255, 0.15) 50%, rgba(255, 255, 255, 0.1));
}
.task.active {
    background: linear-gradient(135deg, rgba(255, 255, 255, 0.75), rgba(255, 255, 255, 0.45));
}
.glyph-fn {
    fill: #0c0ca8;
    font-family: "Liberation Sans", Arial, sans-serif;
    font-weight: bold;
    font-size: 17px;
    text-anchor: middle;
}
.glyph-gb {
    fill: #f22;
    font-family: "Liberation Serif", serif;
    font-weight: bold;
    font-size: 11px;
    text-anchor: middle;
}
.lang {
    margin-left: auto;
    padding: 7px 10px 0 0;
}
.tray {
    display: flex;
    align-items: center;
    border-left: 1px solid #85757f;
    border-radius: 14px 0 0 0;
}
.battery {
    width: 43px;
    height: 20px;
    margin: 0 20px 0 13px;
    border: 1px solid #fff;
    box-shadow: inset 0 0 0 1px #111, 3px 0 0 -1px #eee;
    background: linear-gradient(90deg, #1c9a44 56%, #101010 56%);
    text-align: center;
}
.battery b {
    font-weight: normal;
}
.tray-icons {
    display: flex;
    gap: 9px;
}
.tray-icons svg {
    width: 15px;
    height: 14px;
}
.clock {
    width: 84px;
    margin-left: 3px;
    display: flex;
    flex-direction: column;
    text-align: center;
    line-height: 17px;
}
.show-desktop {
    align-self: stretch;
    width: 14px;
    border: 1px solid #94848e;
    background: linear-gradient(135deg, rgba(255, 255, 255, 0.35), rgba(255, 255, 255, 0.1));
}
```
